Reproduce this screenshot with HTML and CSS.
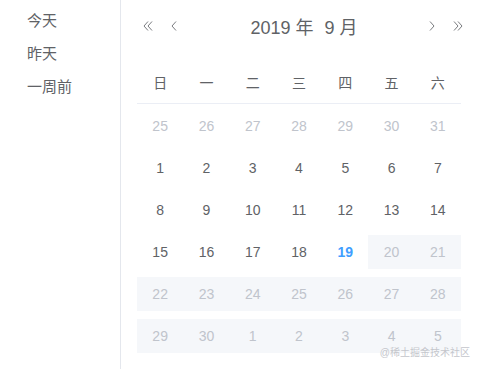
FILE: index.html
```html
<!DOCTYPE html>
<html lang="zh-CN">
<head>
    <meta charset="UTF-8">
    <title>日期选择</title>
    <link rel="stylesheet" href="styles.css">
</head>
<body>
    <div class="picker">
        <!-- shortcuts -->
        <ul class="shortcuts">
            <li>今天</li>
            <li>昨天</li>
            <li>一周前</li>
        </ul>

        <div class="panel">
            <div class="panel-header">
                <div class="nav">
                    <span class="nav-btn">
                        <svg width="12" height="12" viewBox="0 0 12 12"><path d="M6 1.5 L2 6 L6 10.5 M10 1.5 L6 6 L10 10.5" /></svg>
                    </span>
                    <span class="nav-btn">
                        <svg width="12" height="12" viewBox="0 0 12 12"><path d="M8 1.5 L4 6 L8 10.5" /></svg>
                    </span>
                </div>
                <div class="title"><span>2019 年</span><span>9 月</span></div>
                <div class="nav">
                    <span class="nav-btn">
                        <svg width="12" height="12" viewBox="0 0 12 12"><path d="M4 1.5 L8 6 L4 10.5" /></svg>
                    </span>
                    <span class="nav-btn">
                        <svg width="12" height="12" viewBox="0 0 12 12"><path d="M2 1.5 L6 6 L2 10.5 M6 1.5 L10 6 L6 10.5" /></svg>
                    </span>
                </div>
            </div>

            <div class="weekdays">
                <span>日</span><span>一</span><span>二</span><span>三</span><span>四</span><span>五</span><span>六</span>
            </div>

            <div class="dates" id="dates"></div>
        </div>

        <div class="watermark">@稀土掘金技术社区</div>
    </div>

    <script>
        // build the date grid for September 2019, today is the 19th
        const dates = document.getElementById('dates');
        const cells = [];
        for (let d = 25; d <= 31; d++) cells.push({ n: d, cls: 'other' });
        for (let d = 1; d <= 30; d++) {
            if (d === 19) cells.push({ n: d, cls: 'today' });
            else if (d > 19) cells.push({ n: d, cls: 'disabled' });
            else cells.push({ n: d, cls: '' });
        }
        for (let d = 1; d <= 5; d++) cells.push({ n: d, cls: 'disabled' });

        cells.forEach(function (c) {
            const cell = document.createElement('div');
            cell.className = 'cell ' + c.cls;
            cell.innerHTML = '<span>' + c.n + '</span>';
            dates.appendChild(cell);
        });
    </script>
</body>
</html>
```

FILE: styles.css
```css
* {
    box-sizing: border-box;
    margin: 0;
    padding: 0;
}

body {
    background-color: #fff;
    font-family: "Liberation Sans", "Noto Sans CJK SC", sans-serif;
    color: #606266;
}

.picker {
    position: relative;
    display: flex;
    width: 480px;
    height: 369px;
}

.shortcuts {
    list-style: none;
    width: 121px;
    border-right: 1px solid #e4e7ed;
    padding-top: 4px;
    padding-left: 27px;
}

.shortcuts li {
    font-size: 15px;
    line-height: 33px;
    color: #606266;
}

.panel {
    flex: 1;
    padding: 0 19px 0 16px;
}

.panel-header {
    height: 52px;
    display: flex;
    align-items: center;
    justify-content: space-between;
    padding: 0 0 0 5px;
    margin-right: -3px;
}

.nav {
    display: flex;
    gap: 14px;
}

.nav-btn {
    display: flex;
    width: 12px;
    height: 12px;
}

.nav-btn svg path {
    fill: none;
    stroke: #7a7c80;
    stroke-width: 1;
}

.title {
    font-size: 18px;
    color: #606266;
    display: flex;
    gap: 11px;
    margin-left: 2px;
}

.weekdays {
    margin-top: 10px;
    display: grid;
    grid-template-columns: repeat(7, 1fr);
    height: 42px;
    border-bottom: 1px solid #ebeef5;
    padding-bottom: 2px;
}

.weekdays span {
    display: flex;
    align-items: center;
    justify-content: center;
    font-size: 14px;
    color: #606266;
}

.dates {
    margin-top: 1px;
    display: grid;
    grid-template-columns: repeat(7, 1fr);
    grid-auto-rows: 42px;
}

.cell {
    display: flex;
    align-items: center;
    justify-content: center;
    margin: 4px 0;
    font-size: 14px;
    color: #606266;
}

.cell.other {
    color: #c0c4cc;
}

.cell.today {
    color: #409eff;
    font-weight: bold;
}

.cell.disabled {
    background-color: #f5f7fa;
    color: #c0c4cc;
}

.watermark {
    position: absolute;
    right: 10px;
    bottom: 10px;
    font-size: 10px;
    color: #c4c6cc;
    text-shadow: 0 0 1px #fff;
}
```
